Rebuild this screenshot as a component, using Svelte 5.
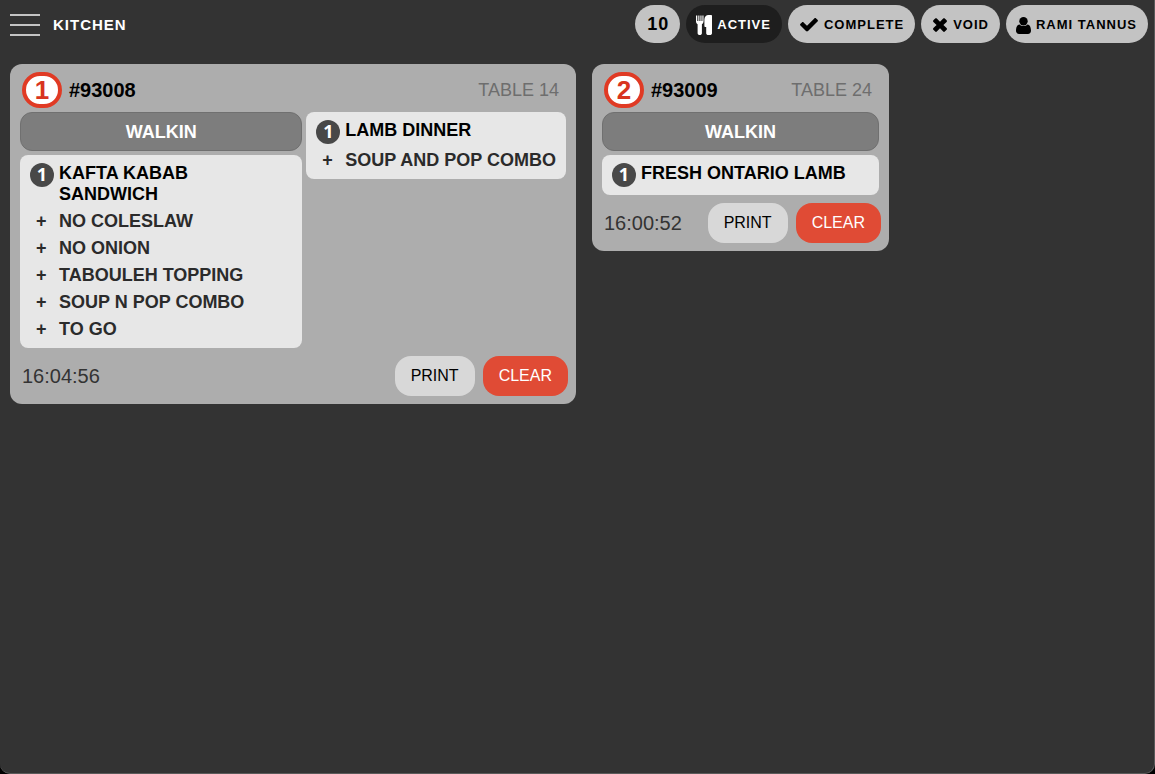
<script lang="ts">
  type Item = { qty: number; name: string; mods: string[] };
  type Order = {
    position: number;
    number: string;
    table: string;
    type: string;
    time: string;
    columns: Item[][];
  };

  let filter = $state('active');

  let orders = $state<Order[]>([
    {
      position: 1,
      number: '#93008',
      table: 'TABLE 14',
      type: 'WALKIN',
      time: '16:04:56',
      columns: [
        [
          {
            qty: 1,
            name: 'KAFTA KABAB SANDWICH',
            mods: ['NO COLESLAW', 'NO ONION', 'TABOULEH TOPPING', 'SOUP N POP COMBO', 'TO GO'],
          },
        ],
        [{ qty: 1, name: 'LAMB DINNER', mods: ['SOUP AND POP COMBO'] }],
      ],
    },
    {
      position: 2,
      number: '#93009',
      table: 'TABLE 24',
      type: 'WALKIN',
      time: '16:00:52',
      columns: [[{ qty: 1, name: 'FRESH ONTARIO LAMB', mods: [] }]],
    },
  ]);

  function clearOrder(number: string) {
    orders = orders.filter((o) => o.number !== number);
  }
</script>

<div class="screen">
  <header>
    <button class="menu" aria-label="Menu">
      <span></span>
      <span></span>
      <span></span>
    </button>
    <h1>KITCHEN</h1>

    <nav>
      <button class="pill count">10</button>
      <button class="pill tight" class:selected={filter === 'active'} onclick={() => (filter = 'active')}>
        <svg width="16" height="20" viewBox="0 0 16 20" aria-hidden="true">
          <path d="M0 .5h1.300v5.500h1V.5h1.100v5.500h1V.5h1.100v5.500h.9V.5h1.100v6c0 1.200-.6 2.100-1.600 2.700v9c0 1-.9 1.800-2.100 1.800s-2.200-.8-2.200-1.800v-9C.6 8.600 0 7.700 0 6.500z" />
          <path d="M12.500 0h2.700c.5 0 .8.300.8.800v17.400c0 1-.9 1.800-2.100 1.800h-1.600c-1.200 0-2.100-.8-2.100-1.800V12H9.200c-.5 0-.8-.3-.8-.8V4.500C8.400 2 10.200 0 12.500 0z" />
        </svg>
        ACTIVE
      </button>
      <button class="pill" class:selected={filter === 'complete'} onclick={() => (filter = 'complete')}>
        <svg width="18" height="14" viewBox="0 0 18 14" aria-hidden="true">
          <path d="M17.500 3.500 8 13c-.6.600-1.400.600-2 0L.500 7.600c-.6-.6-.6-1.200 0-1.800l1.400-1.400c.5-.5 1.200-.5 1.700 0L7 7.800 14.300.500c.6-.6 1.200-.6 1.800 0l1.400 1.300c.6.600.6 1.200 0 1.700z" />
        </svg>
        COMPLETE
      </button>
      <button class="pill" class:selected={filter === 'void'} onclick={() => (filter = 'void')}>
        <svg width="14" height="14" viewBox="0 0 14 14" aria-hidden="true">
          <path d="M13.600 11.700 11.800 13.500c-.5.500-1.100.500-1.600 0L7 10.300 3.800 13.500c-.5.500-1.100.500-1.600 0L.400 11.700c-.5-.5-.5-1.100 0-1.600L3.600 7 .400 3.900c-.5-.5-.5-1.100 0-1.600L2.200.500c.5-.5 1.100-.5 1.600 0L7 3.700 10.200.500c.5-.5 1.100-.5 1.600 0l1.800 1.800c.5.500.5 1.100 0 1.600L10.400 7l3.200 3.100c.5.500.5 1.100 0 1.600z" />
        </svg>
        VOID
      </button>
      <button class="pill tight">
        <svg width="15" height="17" viewBox="0 0 15 17" aria-hidden="true">
          <circle cx="7.500" cy="4.200" r="4.200" />
          <path d="M3.600 7.400c1 1 2.300 1.700 3.900 1.700s2.900-.7 3.900-1.700C14 7.600 15 10.500 15 13.600 15 15.700 13.800 17 11.900 17H3.100C1.200 17 0 15.700 0 13.600 0 10.500 1 7.600 3.600 7.400z" />
        </svg>
        RAMI TANNUS
      </button>
    </nav>
  </header>

  <main>
    {#each orders as order (order.number)}
      <article class="order" class:wide={order.columns.length > 1}>
        <div class="order-head">
          <span class="position">{order.position}</span>
          <h2>{order.number}</h2>
          <span class="table-name">{order.table}</span>
        </div>

        <div class="columns">
          {#each order.columns as column, i}
            <div class="column">
              {#if i === 0}
                <div class="type">{order.type}</div>
              {/if}
              {#each column as item}
                <div class="item">
                  <div class="line">
                    <span class="qty">{item.qty}</span>
                    <strong>{item.name}</strong>
                  </div>
                  {#if item.mods.length}
                    <ul>
                      {#each item.mods as mod}
                        <li><span class="plus">+</span>{mod}</li>
                      {/each}
                    </ul>
                  {/if}
                </div>
              {/each}
            </div>
          {/each}
        </div>

        <div class="order-foot">
          <time>{order.time}</time>
          <button class="action">PRINT</button>
          <button class="action clear" onclick={() => clearOrder(order.number)}>CLEAR</button>
        </div>
      </article>
    {/each}
  </main>
</div>

<style>
  :global(body) {
    background: #000;
  }

  .screen {
    box-sizing: border-box;
    min-height: 100vh;
    border: solid #5a5a5a;
    border-width: 0 1px 1px 0;
    border-radius: 0 0 10px 10px;
    background: #333;
    color: #000;
    font-family: 'Liberation Sans', Arial, Helvetica, sans-serif;
  }

  button {
    border: 0;
    font-family: inherit;
    cursor: pointer;
  }

  header {
    display: flex;
    align-items: center;
    gap: 13px;
    padding: 5px 6px 5px 10px;
  }

  .menu {
    display: flex;
    flex-direction: column;
    gap: 8px;
    width: 30px;
    padding: 2px 0 0;
    background: none;
  }

  .menu span {
    height: 2px;
    background: #c4c4c4;
  }

  h1 {
    margin: 0;
    color: #fff;
    font-size: 15px;
    letter-spacing: 1px;
  }

  nav {
    display: flex;
    flex-wrap: wrap;
    gap: 6px;
    margin-left: auto;
  }

  .pill {
    display: flex;
    align-items: center;
    gap: 6px;
    height: 38px;
    padding: 0 11px 0 12px;
    border-radius: 19px;
    background: #c3c3c3;
    color: #000;
    font-size: 13px;
    font-weight: bold;
    letter-spacing: 1px;
  }

  .pill svg {
    margin-top: 2px;
    fill: currentColor;
  }

  .pill.selected {
    background: #1e1e1e;
    color: #fff;
  }

  .pill.tight {
    gap: 5px;
    padding-left: 10px;
  }

  .pill.count {
    font-size: 18px;
  }

  main {
    display: flex;
    flex-wrap: wrap;
    align-items: flex-start;
    gap: 16px;
    padding: 16px 10px;
  }

  .order {
    box-sizing: border-box;
    flex: 0 1 297px;
    padding: 8px;
    border-radius: 12px;
    background: #adadad;
  }

  .order.wide {
    flex-basis: 566px;
  }

  .order-head {
    display: flex;
    align-items: center;
    gap: 7px;
    padding: 0 9px 0 4px;
  }

  .position {
    box-sizing: border-box;
    width: 40px;
    height: 36px;
    border: 4px solid #e03a24;
    border-radius: 18px;
    background: #fff;
    color: #d83420;
    font-size: 26px;
    font-weight: bold;
    line-height: 28px;
    text-align: center;
  }

  h2 {
    margin: 0;
    font-size: 20px;
  }

  .table-name {
    margin-left: auto;
    color: #6e6e6e;
    font-size: 18px;
  }

  .columns {
    display: flex;
    gap: 4px;
    padding: 4px 2px 8px;
  }

  .column {
    display: flex;
    flex: 1 1 0;
    flex-direction: column;
    gap: 4px;
  }

  .column + .column {
    flex: none;
  }

  .type {
    border: 1px solid #707070;
    border-radius: 12px;
    background: #7d7d7d;
    color: #fff;
    font-size: 18px;
    font-weight: bold;
    line-height: 38px;
    height: 37px;
    text-align: center;
  }

  .item {
    padding: 8px 10px;
    border-radius: 8px;
    background: #e7e7e7;
    font-size: 18px;
    line-height: 21px;
  }

  .line {
    display: flex;
    align-items: flex-start;
    gap: 5px;
    min-height: 24px;
    padding-right: 8px;
  }

  .qty {
    flex: none;
    width: 24px;
    height: 24px;
    border-radius: 50%;
    background: #484848;
    color: #fff;
    font-family: 'Open Sans', sans-serif;
    font-weight: bold;
    line-height: 22px;
    text-align: center;
  }

  ul {
    margin: 0;
    padding: 0;
    list-style: none;
  }

  li {
    display: flex;
    margin-top: 6px;
    color: #2b2b2b;
    font-weight: bold;
  }

  .plus {
    flex: none;
    width: 23px;
    padding-left: 6px;
  }

  .order-foot {
    display: flex;
    align-items: center;
    gap: 8px;
  }

  time {
    margin-right: auto;
    padding-left: 4px;
    color: #333;
    font-size: 20px;
  }

  .action {
    height: 40px;
    padding: 0 16px;
    border-radius: 16px;
    background: #d8d8d8;
    color: #000;
    font-size: 16px;
  }

  .action.clear {
    background: #e04b35;
    color: #fff;
  }
</style>
